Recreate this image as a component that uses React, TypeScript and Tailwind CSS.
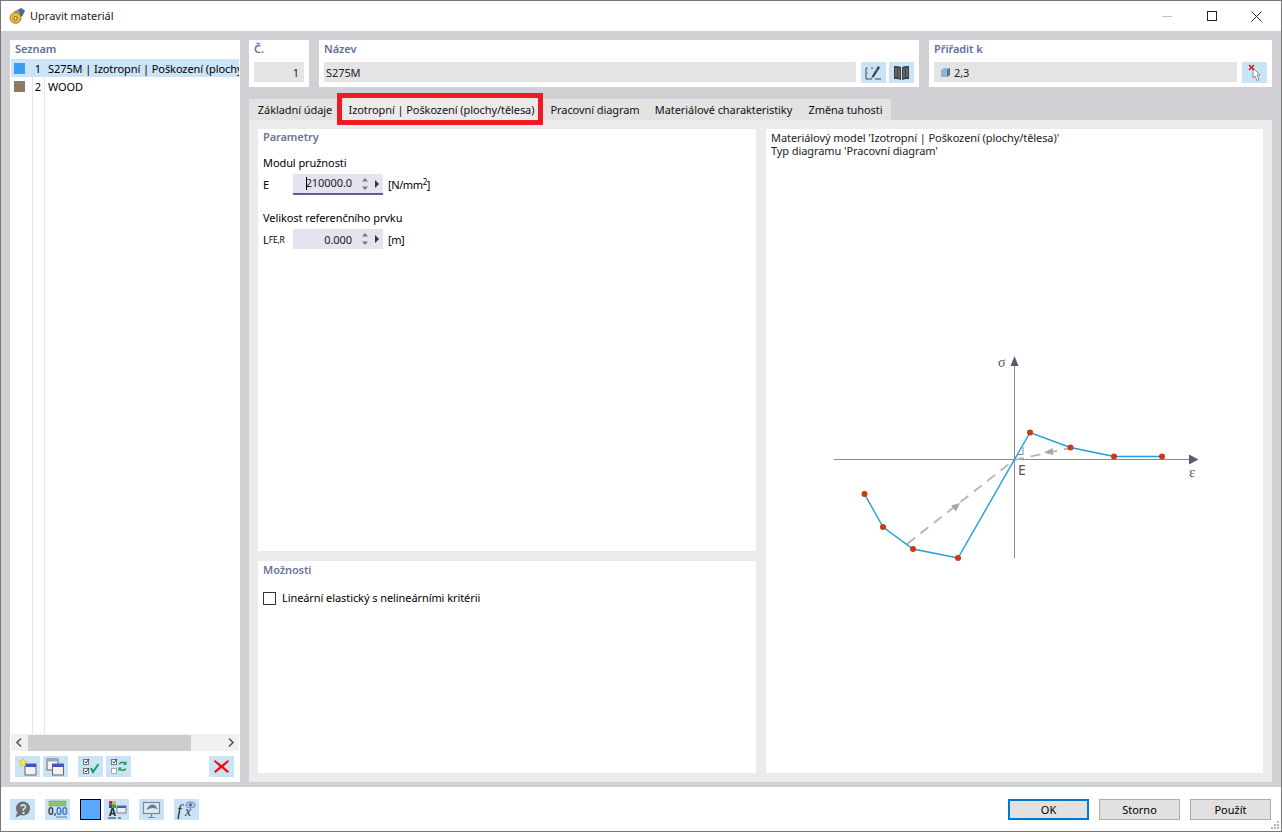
import React from "react";

const font = { fontFamily: '"Noto Sans", "Open Sans", sans-serif' };

function IconBtn({ children, className = "" }: { children: React.ReactNode; className?: string }) {
  return (
    <div className={"w-[25px] h-[21px] bg-[#c9e3f7] flex items-center justify-center shrink-0 " + className}>
      <svg width="21" height="19" viewBox="0 0 21 19">{children}</svg>
    </div>
  );
}

function SpinInput({ value, underline, caret }: { value: string; underline?: boolean; caret?: boolean }) {
  return (
    <div className={"w-[90px] bg-[#e4e4f0] flex items-center relative " + (underline ? "h-[21px] border-b-2 border-[#5b5ba5]" : "h-[20px]")}>
      <div className="w-[59px] text-right text-[#1a1a1a]">
        {caret && <span className="inline-block w-px h-[13px] bg-black align-middle -mr-px" />}
        {value}
      </div>
      <svg width="10" height="14" viewBox="0 0 10 14" className="ml-[8px]">
        <path d="M5 1 L8 4.5 H2 Z M2 9.5 H8 L5 13 Z" fill="#777" />
      </svg>
      <svg width="6" height="8" viewBox="0 0 6 8" className="ml-[4px]">
        <path d="M1 0 L5 4 L1 8 Z" fill="#333" />
      </svg>
    </div>
  );
}

function Tab({ label, active, w }: { label: string; active?: boolean; w: string }) {
  return (
    <div className={"flex items-center justify-center whitespace-nowrap text-[#111] " + w + (active ? " h-[24px] -mt-[2px] outline-[5px] outline-[#ed1c24] -outline-offset-[1px] z-10 bg-[#ebebeb]" : " h-[21px] bg-[#e3e3e3]")}>
      {label}
    </div>
  );
}

function Diagram() {
  return (
    <svg width="390" height="225" viewBox="0 0 390 225" className="block">
      <line x1="14" y1="114.500" x2="372" y2="114.500" stroke="#8a8a96" strokeWidth="1" />
      <path d="M378.500 114.500 L369 109.500 V119.500 Z" fill="#5c5c70" />
      <line x1="194.500" y1="20" x2="194.500" y2="213" stroke="#8a8a96" strokeWidth="1" />
      <path d="M194.500 11 L190.500 21 H198.500 Z" fill="#5c5c70" />
      <path d="M203 102 V109.500 H197" fill="none" stroke="#6a6a80" strokeWidth="0.800" />
      <line x1="87" y1="199" x2="194" y2="115" stroke="#b3b3bb" strokeWidth="1.800" strokeDasharray="10 7" />
      <line x1="194" y1="115" x2="250" y2="103" stroke="#b3b3bb" strokeWidth="1.800" strokeDasharray="10 7" />
      <path d="M140 158 L131 160.500 L136 166.500 Z" fill="#a5a5ae" />
      <path d="M224 107.500 L232.500 103 L233.500 110 Z" fill="#a5a5ae" />
      <polyline
        points="44.500,149 63,182 93,204 138,213 210,87.500 250.500,102.500 294,111.500 342,111.500"
        fill="none"
        stroke="#1f9fdc"
        strokeWidth="1.400"
      />
      {[
        [44.5, 149],
        [63, 182],
        [93, 204],
        [138, 213],
        [210, 87.5],
        [250.5, 102.5],
        [294, 111.5],
        [342, 111.5],
      ].map(([x, y]) => (
        <circle key={x} cx={x} cy={y} r="3" fill="#cc3a0c" />
      ))}
    </svg>
  );
}

export default function App() {
  return (
    <div className="w-[1282px] h-[832px] overflow-hidden bg-white border border-[#777] flex flex-col text-[11px] leading-none tracking-[-0.08px] text-black relative" style={font}>
      {/* title bar */}
      <div className="h-[30px] shrink-0 flex items-center pl-[8px] relative">
        <svg width="17" height="17" viewBox="0 0 18 18" className="shrink-0 mb-[2px]">
          <path d="M5 5 L13 1 L17 4 L14 10 L7 9 Z" fill="#4a6b94" />
          <path d="M5 5 L9 3 L12 7 L7 9 Z" fill="#8aa6c4" />
          <circle cx="7" cy="11.500" r="5.800" fill="#e9bb2c" stroke="#7a6420" strokeWidth="0.800" />
          <circle cx="7" cy="12" r="1.800" fill="#fff4c4" stroke="#5a4a18" strokeWidth="1" />
        </svg>
        <span className="ml-[4px] mb-[2px] text-[11px] tracking-normal text-[#1a1a1a]">Upravit materiál</span>
        <div className="ml-auto flex items-center">
          <div className="w-[45px] flex justify-center"><div className="w-[10px] h-px bg-[#c0c0c0]" /></div>
          <div className="w-[45px] flex justify-center"><div className="w-[10px] h-[10px] border border-[#222]" /></div>
          <div className="w-[45px] flex justify-center mr-[2px]">
            <svg width="11" height="11" viewBox="0 0 11 11"><path d="M0.500 0.500 L10.500 10.500 M10.500 0.500 L0.500 10.500" stroke="#222" strokeWidth="1" /></svg>
          </div>
        </div>
      </div>

      {/* body */}
      <div className="h-[756px] shrink-0 bg-[#d1d0d5] flex gap-[9px] pl-[9px] pr-[9px] pt-[9px] pb-[5px]">
        {/* left list */}
        <div className="w-[230px] h-[742px] bg-white flex flex-col shrink-0">
          <div className="h-[19px] pl-[5px] pb-[2px] flex items-center font-semibold text-[#5f6f9c]">Seznam</div>
          <div className="flex-1 relative mx-[1px]">
            <div className="absolute left-[21px] top-0 bottom-0 w-px bg-[#e6e6e6]" />
            <div className="absolute left-[33px] top-0 bottom-0 w-px bg-[#e6e6e6]" />
            <div className="h-[18px] bg-[#cce4f7] flex items-center overflow-hidden whitespace-nowrap relative">
              <div className="ml-[3px] w-[11px] h-[11px] bg-[#3d9df2] shrink-0" />
              <span className="w-[16px] text-right shrink-0">1</span>
              <span className="ml-[7px]">S275M | Izotropní | Poškození (plochy</span>
            </div>
            <div className="h-[18px] flex items-center relative">
              <div className="ml-[3px] w-[11px] h-[11px] bg-[#8d7a65] shrink-0" />
              <span className="w-[16px] text-right shrink-0">2</span>
              <span className="ml-[7px]">WOOD</span>
            </div>
          </div>
          <div className="h-[17px] mx-[1px] bg-[#f0f0f0] flex items-center">
            <svg width="17" height="17" viewBox="0 0 17 17" className="shrink-0"><path d="M10 4.500 L6 8.500 L10 12.500" fill="none" stroke="#555" strokeWidth="1.600" /></svg>
            <div className="w-[163px] h-[16px] bg-[#cdcdcd]" />
            <div className="flex-1" />
            <svg width="17" height="17" viewBox="0 0 17 17" className="shrink-0"><path d="M7 4.500 L11 8.500 L7 12.500" fill="none" stroke="#555" strokeWidth="1.600" /></svg>
          </div>
          <div className="h-[21px] mt-[5px] mb-[5px] flex items-center pl-[5px] pr-[6px] gap-[3px]">
            <IconBtn>
              <rect x="8" y="7" width="11" height="11" fill="#f2f2f2" stroke="#666" />
              <rect x="8" y="7" width="11" height="3" fill="#3a57c0" />
              <path d="M6 1 L7.300 4 L10.500 4.300 L8 6.400 L8.800 9.500 L6 7.800 L3.200 9.500 L4 6.400 L1.500 4.300 L4.700 4 Z" fill="#f6ea3c" stroke="#c8a820" strokeWidth="0.400" />
            </IconBtn>
            <IconBtn>
              <rect x="2" y="2" width="11" height="11" fill="#f2f2f2" stroke="#666" />
              <rect x="2" y="2" width="11" height="2.500" fill="#9aa6d0" />
              <rect x="7.500" y="7" width="11" height="11" fill="#f2f2f2" stroke="#666" />
              <rect x="7.500" y="7" width="11" height="3" fill="#3a57c0" />
            </IconBtn>
            <div className="w-[4px]" />
            <IconBtn>
              <rect x="3.500" y="2.500" width="5" height="5" fill="#fff" stroke="#777" />
              <rect x="3.500" y="11.500" width="5" height="5" fill="#fff" stroke="#777" />
              <path d="M4.500 4.500 L6 6 L9 2 M4.500 13.500 L6 15 L9 11" fill="none" stroke="#333" strokeWidth="1" />
              <path d="M11 11 L13 15 L18.500 7" fill="none" stroke="#18a060" strokeWidth="2" />
            </IconBtn>
            <IconBtn>
              <rect x="3.500" y="2.500" width="5" height="5" fill="#fff" stroke="#777" />
              <rect x="3.500" y="11.500" width="5" height="5" fill="#fff" stroke="#aaa" />
              <path d="M4.500 4.500 L6 6 L9 2" fill="none" stroke="#333" strokeWidth="1" />
              <path d="M11 7 Q14 4 18 6.500 M18 12 Q14 14.500 11 12" fill="none" stroke="#23a055" strokeWidth="1.500" />
              <path d="M18.500 4 V8 H15 Z M10.500 14.500 V10.500 H14 Z" fill="#23a055" />
            </IconBtn>
            <div className="flex-1" />
            <IconBtn>
              <path d="M4 3 L10.500 8 L17 3 L18 4.500 L12.500 9.500 L18 14.500 L16.500 16 L10.500 11 L4.500 16 L3 14.500 L8.500 9.500 L3 4.500 Z" fill="#f00a0a" />
            </IconBtn>
          </div>
        </div>

        {/* right side */}
        <div className="flex-1 flex flex-col min-w-0">
          <div className="h-[47px] flex gap-[10px] shrink-0">
            <div className="w-[60px] bg-white px-[5px] pt-[3px] flex flex-col">
              <div className="h-[11px] mb-[8px] font-semibold text-[#5f6f9c] flex items-center">Č.</div>
              <div className="h-[20px] bg-[#e4e4e4] flex items-center justify-end pr-[5px] text-[#222]">1</div>
            </div>
            <div className="w-[600px] bg-white px-[5px] pt-[3px] flex flex-col">
              <div className="h-[11px] mb-[8px] font-semibold text-[#5f6f9c] flex items-center">Název</div>
              <div className="flex gap-[3px]">
                <div className="flex-1 h-[20px] bg-[#e4e4e4] flex items-center pl-[2px] text-[#222]">S275M</div>
                <IconBtn className="!h-[21px] ml-[2px]">
                  <path d="M4.500 5 H3 V16 H9 M12 16 H18 M10 5 H8" fill="none" stroke="#444" strokeWidth="1" />
                  <path d="M9 13 L15 3 L17 4.500 L11 14 L8.500 15 Z" fill="#444" />
                  <path d="M14 6 V9 M3 10 H5" stroke="#888" strokeWidth="0.700" />
                </IconBtn>
                <IconBtn className="!h-[21px]">
                  <path d="M3 3 Q7 2.500 10 4 V17 Q7 15.500 3 16 Z M18 3 Q14 2.500 11 4 V17 Q14 15.500 18 16 Z" fill="#444" />
                  <path d="M5 5 V14 M8 5.500 V14.500 M13 5.500 V14.500 M16 5 V14" stroke="#9aa8b4" strokeWidth="0.700" />
                </IconBtn>
              </div>
            </div>
            <div className="w-[343px] bg-white px-[5px] pt-[3px] flex flex-col">
              <div className="h-[11px] mb-[8px] font-semibold text-[#5f6f9c] flex items-center">Přiřadit k</div>
              <div className="flex gap-[5px]">
                <div className="flex-1 h-[20px] bg-[#e4e4e4] flex items-center pl-[7px] gap-[4px] text-[#222]">
                  <svg width="9" height="9" viewBox="0 0 9 9"><path d="M0 2 L3 0 H9 V7 L6 9 H0 Z" fill="#8fb4d6" /><path d="M6 2 H9 V0 Z M6 2 V9 L9 7 V2 Z" fill="#5a7188" /></svg>
                  2,3
                </div>
                <IconBtn className="!h-[21px]">
                  <path d="M9 5 L16 12 H13 L15 16.500 L13 17.500 L11 13 L9 15 Z" fill="#fff" stroke="#777" strokeWidth="0.800" />
                  <path d="M5 2 L10 7 M10 2 L5 7" stroke="#e01020" strokeWidth="1.500" />
                </IconBtn>
              </div>
            </div>
          </div>

          <div className="mt-[12px] h-[21px] flex shrink-0">
            <Tab label="Základní údaje" w="w-[92px]" />
            <Tab label="Izotropní | Poškození (plochy/tělesa)" active w="w-[198px] pl-[3px]" />
            <Tab label="Pracovní diagram" w="w-[112px]" />
            <Tab label="Materiálové charakteristiky" w="w-[145px]" />
            <Tab label="Změna tuhosti" w="w-[95px] pl-[4px]" />
          </div>

          <div className="h-[662px] bg-[#ebebeb] p-[9px] flex gap-[10px]">
            <div className="w-[498px] flex flex-col gap-[10px]">
              <div className="h-[422px] bg-white pl-[5px] pt-[2px]">
                <div className="h-[11px] flex items-center font-semibold text-[#6a7498]">Parametry</div>
                <div className="mt-[15px] h-[11px] flex items-center">Modul pružnosti</div>
                <div className="mt-[6px] flex items-center">
                  <span className="w-[30px]">E</span>
                  <SpinInput value="210000.0" underline caret />
                  <span className="ml-[5px] flex items-start tracking-[-0.4px]">[N/mm<sup className="text-[8px] leading-none -mt-[1px] static">2</sup>]</span>
                </div>
                <div className="mt-[17px] h-[11px] flex items-center">Velikost referenčního prvku</div>
                <div className="mt-[6px] flex items-center">
                  <span className="w-[30px] flex items-end"><span>L</span><span className="text-[8.5px] tracking-[-0.2px]">FE,R</span></span>
                  <SpinInput value="0.000" />
                  <span className="ml-[5px] tracking-[-0.4px]">[m]</span>
                </div>
              </div>
              <div className="h-[212px] bg-white pl-[5px] pt-[3px]">
                <div className="h-[11px] flex items-center font-semibold text-[#6a7498]">Možnosti</div>
                <div className="mt-[17px] flex items-center">
                  <div className="w-[13px] h-[13px] border border-[#333] bg-white" />
                  <span className="ml-[6px] mb-[2px]">Lineární elastický s nelineárními kritérii</span>
                </div>
              </div>
            </div>
            <div className="w-[497px] h-[644px] bg-white flex flex-col">
              <div className="pl-[5px] pt-[3px] leading-[11.500px] text-[#222]">
                <div>Materiálový model 'Izotropní | Poškození (plochy/tělesa)'</div>
                <div className="mt-[1px]">Typ diagramu 'Pracovní diagram'</div>
              </div>
              <div className="mt-[189px] ml-[54px] relative w-[390px] h-[225px]">
                <Diagram />
                <span className="absolute left-[178px] top-[11px] text-[14px] text-[#555]" style={{ fontFamily: '"Liberation Serif", serif' }}>σ</span>
                <span className="absolute left-[198px] top-[118px] text-[14px] text-[#555]">E</span>
                <span className="absolute left-[369px] top-[120px] text-[15px] text-[#555]" style={{ fontFamily: '"Liberation Serif", serif' }}>ε</span>
              </div>
            </div>
          </div>
        </div>
      </div>

      {/* footer */}
      <div className="flex-1 flex items-center pl-[9px] pr-[10px] pt-[1px] relative">
        <IconBtn>
          <circle cx="11" cy="8.500" r="7" fill="#6e6e6e" />
          <path d="M5 13 L3.500 17.500 L9 15 Z" fill="#6e6e6e" />
          <path d="M8.500 6.500 Q11 3.500 13.500 6 Q14 8 11.500 9 V11" fill="none" stroke="#c9e3f7" strokeWidth="1.600" />
          <rect x="10.500" y="12" width="2" height="2" fill="#c9e3f7" />
        </IconBtn>
        <IconBtn className="ml-[10px]">
          <rect x="2" y="1" width="17" height="5" fill="#8fc46a" stroke="#6a9c4a" strokeWidth="0.500" />
          <text x="1" y="15" fontSize="10" fontWeight="600" fill="#333">0,</text>
          <text x="9" y="15" fontSize="10" fontWeight="600" fill="#2f6fc8">00</text>
          <path d="M9 17 H20" stroke="#2f6fc8" strokeWidth="0.800" />
        </IconBtn>
        <div className="ml-[10px] w-[21px] h-[21px] bg-[#5aa9ff] border border-black" />
        <IconBtn className="ml-[3px]">
          <rect x="3" y="1" width="3.500" height="3.500" fill="#d42020" />
          <rect x="6.500" y="1" width="3.500" height="3.500" fill="#e0c020" />
          <rect x="3" y="4.500" width="3.500" height="3.500" fill="#2050c0" />
          <rect x="6.500" y="4.500" width="3.500" height="3.500" fill="#30a040" />
          <rect x="11" y="6" width="9" height="7" fill="#eee" stroke="#555" strokeWidth="0.700" />
          <rect x="11" y="6" width="9" height="2" fill="#4060b0" />
          <text x="3" y="16" fontSize="10" fontWeight="700" fill="#222">A</text>
          <path d="M2 18 H10 M12 18 H15" stroke="#333" strokeWidth="1" />
        </IconBtn>
        <IconBtn className="ml-[10px]">
          <rect x="2.500" y="2.500" width="16" height="11" fill="#dfe9f2" stroke="#7d8a96" strokeWidth="1.200" />
          <path d="M5 10 Q9 3 14 5 L17 9 L12 8 Q9 8 5 10 Z" fill="#5f7f9f" />
          <path d="M10.500 14 V17 M7 17.500 H14" stroke="#7d8a96" strokeWidth="1.200" />
        </IconBtn>
        <IconBtn className="ml-[10px]">
          <text x="1" y="16" fontSize="17" fontStyle="italic" fontFamily="Liberation Serif" fill="#333">f</text>
          <text x="9" y="16" fontSize="14" fontStyle="italic" fontFamily="Liberation Serif" fill="#333">x</text>
          <ellipse cx="14.500" cy="5" rx="4.500" ry="3" fill="#b8c4e8" stroke="#5c68a0" strokeWidth="0.800" />
          <circle cx="14.500" cy="5" r="1.400" fill="#4a5490" />
        </IconBtn>
        <div className="ml-auto flex gap-[10px] text-[11px] tracking-normal">
          <div className="w-[81px] h-[21px] border-2 border-[#0078d7] bg-[#e1e1e1] flex items-center justify-center">OK</div>
          <div className="w-[81px] h-[21px] border border-[#adadad] bg-[#e1e1e1] flex items-center justify-center">Storno</div>
          <div className="w-[81px] h-[21px] border border-[#adadad] bg-[#e1e1e1] flex items-center justify-center">Použít</div>
        </div>
        <svg width="9" height="9" viewBox="0 0 9 9" className="absolute right-[1px] bottom-[1px]">
          <path d="M6 0 H8 V2 H6 Z M3 3 H5 V5 H3 Z M6 3 H8 V5 H6 Z M0 6 H2 V8 H0 Z M3 6 H5 V8 H3 Z M6 6 H8 V8 H6 Z" fill="#b5b5b5" />
        </svg>
      </div>
    </div>
  );
}
